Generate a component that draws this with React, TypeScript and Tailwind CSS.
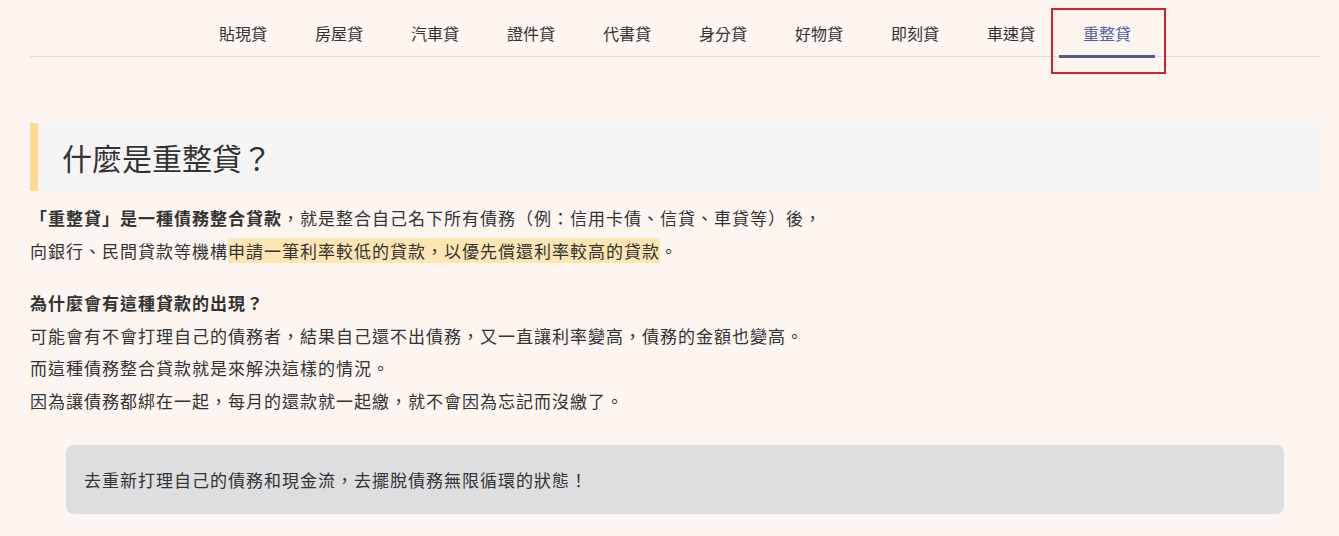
import React from "react";

const tabs = ["貼現貸", "房屋貸", "汽車貸", "證件貸", "代書貸", "身分貸", "好物貸", "即刻貸", "車速貸", "重整貸"];

export default function App() {
  return (
    <div
      className="min-h-[536px] w-full bg-[#fdf5f0] text-[#333333]"
      style={{ fontFamily: '"Noto Sans CJK TC", "Noto Sans", sans-serif' }}
    >
      <div className="ml-[30px] w-[1290px]">
        <nav className="flex justify-center border-b border-[#dddddd]">
          {tabs.map((t, i) => {
            const active = i === tabs.length - 1;
            return (
              <div key={t} className="relative h-[56px] w-[96px] pt-[21px] text-center text-[16px] leading-[24px]">
                <span className={active ? "text-[#5262a0]" : "text-[#333333]"}>{t}</span>
                {active && (
                  <>
                    <div className="absolute bottom-[-2px] left-0 h-[3px] w-[96px] bg-[#4f5b93]" />
                    <div className="absolute left-[-8px] top-[8px] h-[66px] w-[115px] border-2 border-[#d4202a]" />
                  </>
                )}
              </div>
            );
          })}
        </nav>

        <div className="mt-[66px] flex h-[68px] items-center border-l-[8px] border-[#fdd994] bg-[#f5f5f5] pl-[24px]">
          <h1 className="text-[30px] leading-[40px] text-[#333333]">什麼是重整貸？</h1>
        </div>

        <p className="mt-[10px] text-[17px] leading-[33px] tracking-[1px]">
          <strong className="font-bold">「重整貸」是一種債務整合貸款</strong>，就是整合自己名下所有債務（例：信用卡債、信貸、車貸等）後，
          <br />
          向銀行、民間貸款等機構<span className="bg-[#fde6b3]">申請一筆利率較低的貸款，以優先償還利率較高的貸款</span>。
        </p>

        <div className="mt-[20px] text-[17px] leading-[32.5px] tracking-[1px]">
          <p className="font-bold">為什麼會有這種貸款的出現？</p>
          <p>可能會有不會打理自己的債務者，結果自己還不出債務，又一直讓利率變高，債務的金額也變高。</p>
          <p>而這種債務整合貸款就是來解決這樣的情況。</p>
          <p>因為讓債務都綁在一起，每月的還款就一起繳，就不會因為忘記而沒繳了。</p>
        </div>

        <div className="mx-[36px] mt-[28px] flex h-[69px] items-center rounded-[8px] bg-[#dddee0] px-[18px] text-[17px] leading-[24px] tracking-[1px]">
          去重新打理自己的債務和現金流，去擺脫債務無限循環的狀態！
        </div>
      </div>
    </div>
  );
}
